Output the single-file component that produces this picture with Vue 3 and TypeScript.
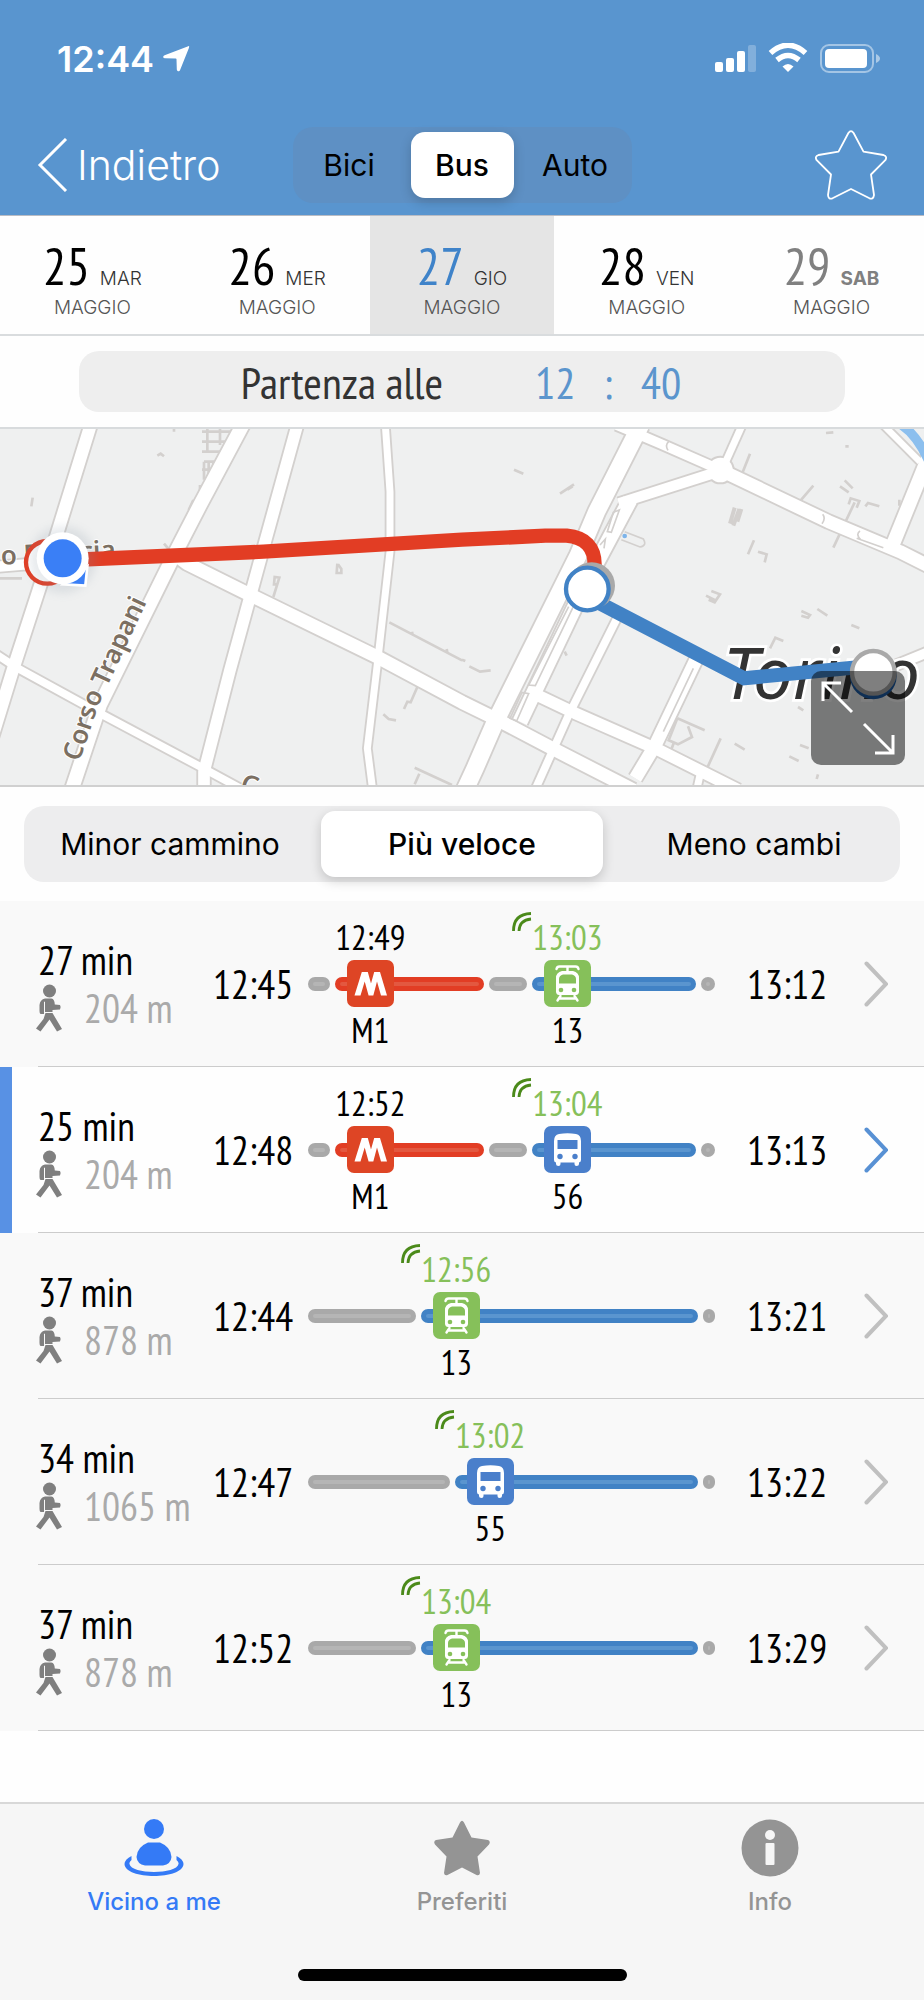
<script setup lang="ts">
import { ref } from 'vue'

type Kind = 'walk' | 'metro' | 'line'
type Icon = 'metro' | 'tram' | 'bus'

interface Stop {
  time: string
  label: string
  icon: Icon
  live: boolean
}
interface Leg {
  kind: Kind
  span: number
  stop?: Stop
}
interface Trip {
  minutes: number
  walk: number
  departure: string
  arrival: string
  legs: Leg[]
}

const modes = ['Bici', 'Bus', 'Auto']
const mode = ref('Bus')

const days = [
  { num: 25, name: 'MAR', weekend: false },
  { num: 26, name: 'MER', weekend: false },
  { num: 27, name: 'GIO', weekend: false },
  { num: 28, name: 'VEN', weekend: false },
  { num: 29, name: 'SAB', weekend: true },
]
const day = ref(27)

const sorts = ['Minor cammino', 'Più veloce', 'Meno cambi']
const sort = ref('Più veloce')

function withMetro(time: string, stop: Stop): Leg[] {
  return [
    { kind: 'walk', span: 22 },
    { kind: 'metro', span: 150, stop: { time, label: 'M1', icon: 'metro', live: false } },
    { kind: 'walk', span: 38 },
    { kind: 'line', span: 165, stop },
    { kind: 'walk', span: 14 },
  ]
}
function direct(walk: number, stop: Stop): Leg[] {
  return [
    { kind: 'walk', span: walk },
    { kind: 'line', span: 386 - walk, stop },
    { kind: 'walk', span: 12 },
  ]
}

const trips: Trip[] = [
  { minutes: 27, walk: 204, departure: '12:45', arrival: '13:12', legs: withMetro('12:49', { time: '13:03', label: '13', icon: 'tram', live: true }) },
  { minutes: 25, walk: 204, departure: '12:48', arrival: '13:13', legs: withMetro('12:52', { time: '13:04', label: '56', icon: 'bus', live: true }) },
  { minutes: 37, walk: 878, departure: '12:44', arrival: '13:21', legs: direct(108, { time: '12:56', label: '13', icon: 'tram', live: true }) },
  { minutes: 34, walk: 1065, departure: '12:47', arrival: '13:22', legs: direct(142, { time: '13:02', label: '55', icon: 'bus', live: true }) },
  { minutes: 37, walk: 878, departure: '12:52', arrival: '13:29', legs: direct(108, { time: '13:04', label: '13', icon: 'tram', live: true }) },
]
const chosen = ref(1)

const roads = [
  { w: 42, d: 'M272 0L170 330L40 730L-40 990' },
  { w: 46, d: 'M728 0L600 240L520 395L300 840L215 1095' },
  { w: 40, d: 'M892 0L790 370L690 735L612 1040V1095' },
  { w: 26, d: 'M1156 0L1170 200V380L1134 700L1102 970L1118 1095' },
  { w: 28, d: 'M-20 682L50 728L300 865L610 1030L730 1095' },
  { w: 44, d: 'M520 385L560 415L755 512L1130 695L1386 832L1500 888L1656 970L1900 1095' },
  { w: 36, d: 'M-20 426L150 412' },
  { w: 56, d: 'M1922 0L1790 260L1735 390L1486 890L1425 1030L1395 1095' },
  { w: 50, d: 'M1890 225L1770 450L1560 890' },
  { w: 34, d: 'M1850 0L1986 58L2161 135' },
  { w: 44, d: 'M2161 135L2486 290L2700 380L2800 430' },
  { w: 36, d: 'M2161 138L1856 235' },
  { w: 26, d: 'M2231 -10L2175 115' },
  { w: 46, d: 'M2800 60L2676 365' },
  { w: 24, d: 'M2650 0L2760 110' },
  { w: 40, d: 'M1590 800L1726 865L1976 975L2215 1095' },
  { w: 28, d: 'M1856 570L1706 870L1605 1095' },
  { w: 44, d: 'M2090 700L1966 960L1906 1060' },
  { w: 26, d: 'M2100 1050L2090 1095' },
  { w: 34, d: 'M2690 720L2800 675' },
]

const details =
  'M606 20H690M606 50H690M606 80H690M622 12V80M660 12V60M612 110H640V160H612V110M606 134H640M626 110V160M600 180V230M580 225L566 255M522 10V20M472 92L482 86L492 94M98 218L94 244M492 356L506 372M820 516L838 458L824 456L822 478H832M1012 416L1010 444H1024V432L1014 418M1168 592L1386 706M1236 620L1238 630M1340 672L1342 682M1252 786L1232 832L1222 830L1212 852M1150 868L1166 882L1188 886M1244 1028L1356 1080M1258 1046L1244 1078M0 460H66M1542 134L1570 146M1680 206L1722 178M1702 194L1718 184M2250 86L2228 142M2440 182L2402 226M2534 166L2558 190M2520 184L2546 202M2564 232L2500 368M2546 238L2552 220L2578 228L2570 248M2596 244L2604 234L2638 244M2698 224V242M2262 346L2244 388M2274 380L2300 388L2294 412M2118 512L2150 528M2134 498L2160 508L2144 532L2126 524M2452 552L2482 572M2404 558L2430 570L2424 578L2404 572M2554 600L2578 610M2310 670L2326 638L2350 648M2478 24L2500 22M2536 64H2546M2394 846L2410 856M2400 960L2426 970M2368 994L2396 1008M2204 956L2234 974M2162 940L2122 1028M2032 880L2114 916M2032 880L2006 946L2034 958L2076 936L2064 904M2022 952L2010 984M2454 1048L2450 1062M1386 704L1396 708M1408 724L1440 740L1472 736M1694 680L1700 692'
</script>

<template>
  <div class="app">
    <header class="top">
      <div class="status">
        <span class="clock">12:44</span>
        <svg class="locate" viewBox="0 0 28 28" aria-hidden="true"><path d="M25.6 1.4Q28 .4 26.9 3L18 25.2Q17.400 26.700 16 26.200Q14.800 25.800 14.800 24.500L14.500 14.200Q14.400 13.500 13.800 13.500L3 13.200Q1.300 13.100 1.200 11.900Q1.100 10.900 2.600 10.300Z" fill="#fff" /></svg>
        <svg class="radio" viewBox="0 0 170 32" aria-hidden="true">
          <g fill="#fff">
            <rect x="1" y="19" width="8" height="10" rx="2" />
            <rect x="12" y="15" width="8" height="14" rx="2" />
            <rect x="23" y="8" width="8" height="21" rx="2" />
            <rect x="34" y="2" width="8" height="27" rx="2" opacity=".25" />
            <path d="M74 29L68.500 23.500Q74 18.500 79.500 23.500Z" />
          </g>
          <path d="M56.500 10Q74-5.500 91.500 10M63 17Q74 8 85 17" fill="none" stroke="#fff" stroke-width="5.500" />
          <rect x="107" y="2" width="52" height="27" rx="8" fill="none" stroke="#fff" stroke-opacity=".45" stroke-width="2" />
          <rect x="111" y="6" width="42" height="19" rx="4" fill="#fff" />
          <path d="M162 11Q166 13 166 15.500T162 20Z" fill="#fff" opacity=".5" />
        </svg>
      </div>
      <div class="nav">
        <button type="button" class="back">
          <svg viewBox="0 0 32 54" aria-hidden="true"><path d="M29 1L3 27L29 53" fill="none" stroke="#fff" stroke-width="3" /></svg>
          Indietro
        </button>
        <div class="segments modes">
          <button v-for="m in modes" :key="m" type="button" :class="{ on: m === mode }" :aria-pressed="m === mode" @click="mode = m">{{ m }}</button>
        </div>
        <button type="button" class="fav" aria-label="Aggiungi ai preferiti">
          <svg viewBox="0 0 72 72" aria-hidden="true"><path d="M33.400 4Q36 .2 38.600 4L48.500 22.700L68.500 26Q72.600 27.500 70.300 31.200L56 45.500L59 66Q58.300 70.700 54.500 69.300L36 60L17.500 69.300Q13.200 70.700 13 66L16 45.500L1.700 31.200Q-.6 27.500 3.500 26L23.500 22.700Z" fill="none" stroke="#fff" stroke-width="1.800" stroke-linejoin="round" /></svg>
        </button>
      </div>
    </header>

    <nav class="days" aria-label="Giorno">
      <button v-for="d in days" :key="d.num" type="button" :class="{ on: d.num === day, weekend: d.weekend }" @click="day = d.num">
        <span class="date"><span class="num">{{ d.num }}</span> <span class="name">{{ d.name }}</span></span>
        <span class="month">MAGGIO</span>
      </button>
    </nav>

    <div class="when">
      <button type="button">
        <span class="lead">Partenza alle</span>
        <span class="time"><span>12</span><span>:</span><span>40</span></span>
      </button>
    </div>

    <section class="map" aria-label="Mappa del percorso">
      <svg viewBox="0 12 2772 1068" preserveAspectRatio="xMidYMid slice">
        <path :d="details" fill="none" stroke="#d3d0ce" stroke-width="8" />
        <path d="M2190 296L2204 248M2200 302L2218 252M2212 290L2224 252" stroke="#d3d0ce" stroke-width="12" />
        <path v-for="(r, i) in roads" :key="'c' + i" :d="r.d" fill="none" stroke="#d3d0ce" :stroke-width="r.w + 6" stroke-linejoin="round" />
        <circle cx="2161" cy="135" r="43" fill="#d3d0ce" />
        <path v-for="(r, i) in roads" :key="'f' + i" :d="r.d" fill="none" stroke="#fff" :stroke-width="r.w - 5" stroke-linejoin="round" />
        <circle cx="2161" cy="135" r="37" fill="#fff" />
        <path d="M1706 545L1586 780L1606 782L1720 545M1566 802L1530 880L1550 888L1586 806ZM1840 262L1822 320L1834 322L1858 255ZM1800 360L1816 342L1812 370M1874 320L1930 342Q1942 362 1920 366L1864 344M2006 50Q1994 60 2004 76M2468 268Q2478 280 2466 296M2580 318Q2566 328 2582 344M2570 340L2650 368M2080 730L1990 920" fill="none" stroke="#d3d0ce" stroke-width="5" />
        <path d="M2705 0Q2750 30 2785 105" fill="none" stroke="#8cbfee" stroke-width="28" />
        <circle cx="1874" cy="333" r="7" fill="#7db4ea" />
        <g class="street">
          <text x="4" y="419" transform="rotate(-3 4 419)">o Francia</text>
          <path id="trapani" d="M238 1012L296 840L452 506L540 330" fill="none" />
          <text><textPath href="#trapani">Corso Trapani</textPath></text>
          <text x="716" y="1096" transform="rotate(20 716 1096)">C</text>
        </g>
        <text class="city" x="2168" y="822">Torino</text>
        <path d="M142 408L790 380L1386 344L1636 332H1700Q1784 340 1784 420V470" fill="none" stroke="#e23d24" stroke-width="43" stroke-linejoin="round" />
        <path d="M1786 528L2232 760L2620 722" fill="none" stroke="#4182c5" stroke-width="42" stroke-linejoin="miter" />
        <circle cx="1775" cy="482" r="70" fill="#a9a9a9" />
        <circle cx="1762" cy="492" r="64" fill="#fff" stroke="#4182c5" stroke-width="13" />
        <circle cx="2620" cy="753" r="70" fill="#1f5fa8" />
        <circle cx="2620" cy="742" r="64" fill="#fff" stroke="#a9a9a9" stroke-width="13" />
        <circle cx="142" cy="412" r="64" fill="#fff" stroke="#e23d24" stroke-width="13" />
        <circle cx="188" cy="404" r="100" class="halo" />
        <path d="M190 478L262 424L256 482Z" fill="#3a7ff6" stroke="#fff" stroke-width="8" />
        <circle cx="188" cy="400" r="78" fill="#fff" />
        <circle cx="188" cy="400" r="57" fill="#3a7ff6" />
      </svg>
      <button type="button" class="expand" aria-label="Espandi mappa">
        <svg viewBox="0 0 94 94" aria-hidden="true"><path d="M12 30V12H30M12 12L41 41M64 82H82V64M82 82L53 53" fill="none" stroke="#fff" stroke-width="3" /></svg>
      </button>
    </section>

    <div class="segments sorts">
      <button v-for="s in sorts" :key="s" type="button" :class="{ on: s === sort }" :aria-pressed="s === sort" @click="sort = s">{{ s }}</button>
    </div>

    <ul class="trips">
      <li v-for="(t, i) in trips" :key="i" :class="{ chosen: i === chosen }">
        <button type="button" class="trip" @click="chosen = i">
          <span class="summary">
            <span class="mins">{{ t.minutes }} min</span>
            <span class="walked">
              <svg viewBox="0 0 26 48" aria-hidden="true">
                <circle cx="13.500" cy="7" r="6.500" />
                <path d="M9 14.500H15.500Q18.500 15 18.800 20.500L24 21Q25.500 23.500 24 25.500L16.500 26V28L9 28V17.500L8 18V30H4.500Q3.500 29.500 3.500 27V21Q4 15.500 9 14.500Z" />
                <path d="M9.500 29H16.500L26 45L21 47.500L13.500 35.500L4.500 47.500L0 44.500L7.500 35Z" />
              </svg>
              {{ t.walk }} m
            </span>
          </span>
          <span class="clocktime">{{ t.departure }}</span>
          <span class="track">
            <span v-for="(leg, k) in t.legs" :key="k" class="leg" :class="leg.kind" :style="{ flexGrow: leg.span }">
              <span class="bar"></span>
              <span v-if="leg.stop" class="stop">
                <span class="stoptime" :class="{ live: leg.stop.live }">
                  <svg v-if="leg.stop.live" class="signal" viewBox="0 0 20 20" aria-hidden="true"><path d="M1.500 19Q1.500 2 19 1.500M7 19Q7.500 8 19 7" fill="none" stroke="#4b8a1a" stroke-width="2.800" /></svg>
                  {{ leg.stop.time }}
                </span>
                <svg v-if="leg.stop.icon === 'metro'" class="badge" viewBox="0 0 47 47" aria-hidden="true">
                  <rect width="47" height="47" rx="7" fill="#de4525" />
                  <path d="M7.500 35.500L14.800 12H20.800L24 23.500L27.200 12H33L40 35.500H34L30 21.500L26.300 35.500H21.600L17.700 21.500L13.500 35.500Z" fill="#fff" />
                </svg>
                <svg v-else-if="leg.stop.icon === 'tram'" class="badge" viewBox="0 0 47 47" aria-hidden="true">
                  <rect width="47" height="47" rx="7" fill="#86c05a" />
                  <path d="M12.500 9Q13 6.500 15.500 6.500H31.500Q34 6.500 34.500 9M23.500 7V12" fill="none" stroke="#fff" stroke-width="2.400" stroke-linecap="round" />
                  <path fill-rule="evenodd" d="M18 11H29Q35 12.500 35 18V32Q34.500 35 32 35H15Q12.500 35 12 32V18Q12 12.500 18 11ZM19 14.500Q15 15.500 15 19V23.500H32V19Q32 15.500 28 14.500Z" fill="#fff" />
                  <circle cx="17" cy="30" r="2.300" fill="#86c05a" /><circle cx="30" cy="30" r="2.300" fill="#86c05a" />
                  <path d="M16.500 36L13.500 40.500M30.500 36L33.500 40.500M15 38.500H32" fill="none" stroke="#fff" stroke-width="2.400" stroke-linecap="round" />
                </svg>
                <svg v-else class="badge" viewBox="0 0 47 47" aria-hidden="true">
                  <rect width="47" height="47" rx="7" fill="#4a7fcb" />
                  <path fill-rule="evenodd" d="M10 15Q10 9 15 8Q23.500 6.500 32 8Q37 9 37 15V34Q37 36 35 36.500V38Q35 40 32.500 40Q30.500 40 30.500 38V36.500H16.500V38Q16.500 40 14.500 40Q12 40 12 38V36.500Q10 36 10 34ZM13.500 14V23H33.500V14Z" fill="#fff" />
                  <circle cx="16" cy="30.500" r="2.700" fill="#4a7fcb" /><circle cx="31" cy="30.500" r="2.700" fill="#4a7fcb" />
                </svg>
                <span class="stopname">{{ leg.stop.label }}</span>
              </span>
            </span>
          </span>
          <span class="clocktime arrival">{{ t.arrival }}</span>
          <svg class="go" viewBox="0 0 24 46" aria-hidden="true"><path d="M2.500 2.500L22 23L2.500 43.500" fill="none" stroke="currentColor" stroke-width="4" stroke-linecap="round" /></svg>
        </button>
      </li>
    </ul>

    <footer class="tabs">
      <nav>
        <a href="#vicino" class="on" aria-current="page">
          <svg viewBox="0 0 60 60" aria-hidden="true"><g fill="currentColor"><circle cx="30" cy="12" r="10" /><path d="M24 25.500H36Q47 30 47.500 40Q47 47 39 48.500H21Q13 47 12.500 40Q13 30 24 25.500Z" /><path d="M7.500 39Q1 42 .5 47C1 63 59 63 59.500 47Q59 42 52.500 39V43Q55 45 54.500 47C53 57.500 7 57.500 5.500 47Q5 45 7.500 43Z" /></g></svg>
          <span>Vicino a me</span>
        </a>
        <a href="#preferiti">
          <svg viewBox="0 0 60 60" aria-hidden="true"><path d="M28 5.500Q30 2 32 5.500L39.500 20.500L56 23Q59 24.500 57 27.500L45.500 39.500L48 56Q47.500 59 44.500 58L30 50.500L15.500 58Q12.500 59 12 56L14.500 39.500L3 27.500Q1 24.500 4 23L20.500 20.500Z" fill="currentColor" /></svg>
          <span>Preferiti</span>
        </a>
        <a href="#info">
          <svg viewBox="0 0 60 60" aria-hidden="true"><circle cx="30" cy="31" r="28.500" fill="currentColor" /><circle cx="30" cy="18" r="5" fill="#f6f6f6" /><rect x="25.500" y="26" width="9" height="22" rx="1" fill="#f6f6f6" /></svg>
          <span>Info</span>
        </a>
      </nav>
      <div class="home"></div>
    </footer>
  </div>
</template>

<style>
html,
body {
  margin: 0;
  background: #fff;
}
</style>

<style scoped>
.app {
  display: flex;
  flex-direction: column;
  min-height: 100vh;
  font-family: Inter, "Liberation Sans", sans-serif;
  color: #000;
  background: #fefefe;
}
button {
  margin: 0;
  padding: 0;
  border: 0;
  background: none;
  color: inherit;
  font: inherit;
  cursor: pointer;
}
svg {
  display: block;
}
.top {
  background: #5995cf;
  border-bottom: 1px solid #b9bcc4;
  color: #fff;
}
.status {
  display: flex;
  align-items: center;
  height: 118px;
  padding: 0 40px 0 57px;
}
.clock {
  font-size: 36px;
  font-weight: 600;
}
.locate {
  width: 28px;
  height: 28px;
  margin-left: 8px;
}
.radio {
  width: 170px;
  height: 32px;
  margin-left: auto;
}
.nav {
  display: grid;
  grid-template-columns: 1fr auto 1fr;
  align-items: center;
  height: 94px;
  padding: 0 37px 3px;
}
.back {
  display: flex;
  align-items: center;
  gap: 8px;
  justify-self: start;
  font-size: 41px;
  font-weight: 300;
}
.back svg {
  width: 32px;
  height: 54px;
}
.fav {
  justify-self: end;
}
.fav svg {
  width: 72px;
  height: 72px;
}
.segments {
  display: grid;
  box-sizing: border-box;
  height: 76px;
  border-radius: 20px;
  background: #ededee;
  font-size: 30px;
  color: #000;
}
.segments button {
  margin: 5px;
  border-radius: 14px;
}
.segments .on {
  background: #fff;
  font-weight: 500;
  box-shadow: 0 4px 12px rgba(0, 0, 0, 0.18);
}
.modes {
  grid-template-columns: repeat(3, 113px);
  background: #5e90c4;
}
.days {
  display: grid;
  grid-template-columns: repeat(5, 1fr);
  border-bottom: 2px solid #d9dcde;
}
.days button {
  display: flex;
  flex-direction: column;
  align-items: center;
  height: 118px;
  padding-top: 18px;
  box-sizing: border-box;
}
.date {
  display: flex;
  align-items: baseline;
  gap: 10px;
  height: 63px;
  line-height: 63px;
}
.num {
  font-family: "PT Sans Narrow", "Liberation Sans Narrow", "Liberation Sans", sans-serif;
  font-size: 52px;
}
.name,
.month {
  font-size: 19px;
  font-weight: 300;
}
.name {
  color: #333;
}
.month {
  line-height: 22px;
  color: #555;
}
.days .on {
  background: #e5e5e5;
}
.on .num {
  color: #3f83c9;
}
.weekend .num,
.weekend .name {
  color: #808080;
}
.weekend .name {
  font-weight: 700;
}
.when {
  padding: 15px 79px;
  border-bottom: 2px solid #d8dbdd;
}
.when button {
  display: grid;
  grid-template-columns: 364px 1fr;
  column-gap: 92px;
  align-items: center;
  width: 100%;
  height: 61px;
  border-radius: 20px;
  background: #eee;
  font-family: "PT Sans Narrow", "Liberation Sans Narrow", "Liberation Sans", sans-serif;
  font-size: 45px;
}
.lead {
  text-align: right;
  color: #333;
}
.time {
  display: flex;
  gap: 28px;
  color: #5b95cd;
}
.map {
  position: relative;
  border-bottom: 2px solid #d0d0d0;
}
.map > svg {
  width: 100%;
  height: 356px;
  background: #eff0f0;
}
.street {
  font-family: "Noto Sans", sans-serif;
  font-size: 78px;
  font-weight: 600;
  fill: #7b6f62;
  stroke: #fff;
  stroke-width: 6px;
  paint-order: stroke;
}
.street path {
  stroke: none;
}
.city {
  font-family: "Noto Sans", sans-serif;
  font-size: 212px;
  font-style: italic;
  fill: #333;
  stroke: #fff;
  stroke-width: 16px;
  paint-order: stroke;
}
.halo {
  fill: #8090a0;
  opacity: 0.18;
  filter: blur(14px);
}
.expand {
  position: absolute;
  right: 19px;
  bottom: 20px;
  border-radius: 10px;
  background: rgba(0, 0, 0, 0.5);
}
.expand svg {
  width: 94px;
  height: 94px;
}
.sorts {
  grid-template-columns: repeat(3, 1fr);
  margin: 19px 24px;
}
.trips {
  margin: 0;
  padding: 0;
  list-style: none;
}
.trips li {
  display: flex;
  background: #f9f9f9;
}
.trips .chosen {
  background: #fefefe;
  box-shadow: inset 12px 0 #5891e4;
}
.trip {
  display: grid;
  grid-template-columns: 175px 95px 1fr 149px 24px;
  align-items: center;
  width: calc(100% - 38px);
  height: 166px;
  margin-left: 38px;
  padding-right: 36px;
  box-sizing: border-box;
  border-bottom: 1px solid #ccc;
  font-family: "PT Sans Narrow", "Liberation Sans Narrow", "Liberation Sans", sans-serif;
  font-size: 40px;
  text-align: left;
}
.summary {
  display: flex;
  flex-direction: column;
  line-height: 48px;
}
.walked {
  display: flex;
  align-items: center;
  gap: 22px;
  margin-left: -2px;
  color: #aaa;
  white-space: nowrap;
}
.walked svg {
  width: 26px;
  height: 48px;
  fill: #7f7f7f;
}
.arrival {
  padding-left: 32px;
}
.track {
  display: flex;
  gap: 5px;
}
.leg {
  display: grid;
  flex-basis: 0;
  min-width: 0;
  align-items: center;
}
.bar,
.stop {
  grid-area: 1 / 1;
}
.bar {
  box-sizing: border-box;
  height: 14px;
  border: 5px solid #a9a9a9;
  border-radius: 7px;
  background: #b5b5b5;
}
.metro .bar {
  border-color: #e23d24;
  background: #e35840;
}
.line .bar {
  border-color: #4182c5;
  background: #5a95cf;
}
.stop {
  display: flex;
  flex-direction: column;
  align-items: center;
  width: 47px;
  margin-left: 12px;
  font-size: 35px;
  line-height: 46px;
}
.stoptime {
  position: relative;
}
.live {
  color: #86c05a;
}
.signal {
  position: absolute;
  right: 100%;
  top: -2px;
  width: 20px;
  height: 20px;
}
.badge {
  width: 47px;
  height: 47px;
}
.go {
  width: 24px;
  height: 46px;
  color: #c0c0c0;
}
.chosen .go {
  color: #5891d4;
}
.tabs {
  margin-top: auto;
  border-top: 2px solid #d8d8d8;
  background: #f6f6f6;
}
.tabs nav {
  display: grid;
  grid-template-columns: repeat(3, 1fr);
  padding-top: 13px;
}
.tabs a {
  display: flex;
  flex-direction: column;
  align-items: center;
  gap: 10px;
  color: #949494;
  font-size: 24px;
  font-weight: 500;
  line-height: 30px;
  text-decoration: none;
}
.tabs a svg {
  width: 60px;
  height: 60px;
}
.tabs .on {
  color: #347af6;
}
.home {
  width: 329px;
  max-width: 60%;
  height: 12px;
  margin: 52px auto 19px;
  border-radius: 6px;
  background: #000;
}
</style>
